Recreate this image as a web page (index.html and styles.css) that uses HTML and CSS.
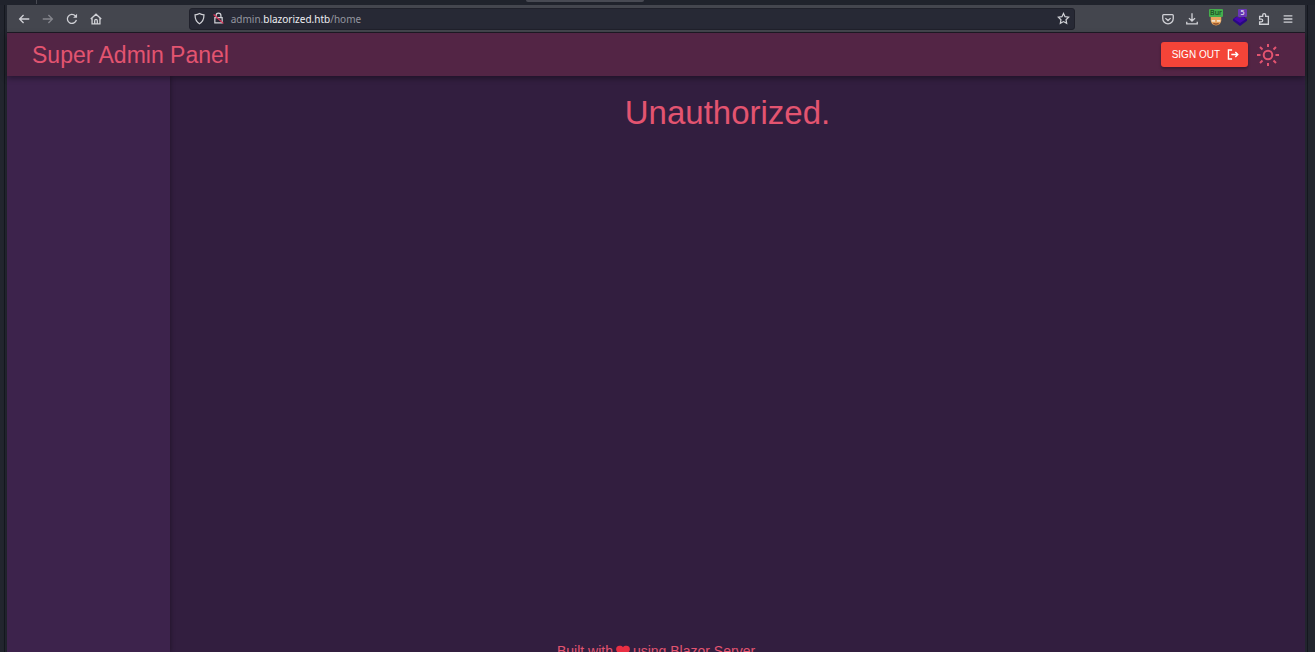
FILE: index.html
```html
<!DOCTYPE html>
<html lang="en">
<head>
<meta charset="utf-8">
<title>Super Admin Panel</title>
<link rel="stylesheet" href="styles.css">
</head>
<body>
<div class="tabstrip"><span class="tab-divider"></span><span class="tab-edge"></span></div>
<div class="window">
  <div class="toolbar">
    <nav class="tools nav-tools" aria-label="Navigation">
      <button class="tool" aria-label="Back"><svg viewBox="0 0 16 16"><path d="M14 8H3M7.500 3.500 3 8l4.500 4.500"/></svg></button>
      <button class="tool dim" aria-label="Forward"><svg viewBox="0 0 16 16"><path d="M2 8h11M8.500 3.500 13 8l-4.500 4.500"/></svg></button>
      <button class="tool" aria-label="Reload"><svg viewBox="0 0 16 16"><path d="M13 9a5.200 5.200 0 1 1-1.300-4.700L13 5.500"/><path d="M13.800 2v4.500H9.300z" class="solid"/></svg></button>
      <button class="tool" aria-label="Home"><svg viewBox="0 0 16 16"><path d="M2 8 8 2.500 14 8M3.500 7v6.500h9V7M6.500 13.500V10a1.500 1.500 0 0 1 3 0v3.500"/></svg></button>
    </nav>
    <div class="urlbar">
      <svg class="url-icon" viewBox="0 0 16 16"><path d="M8 1.800c1.500 1 3.500 1.500 5.500 1.700 0 5-1 8.500-5.500 10.900C3.500 12 2.500 8.500 2.500 3.500 4.500 3.300 6.500 2.800 8 1.800z"/></svg>
      <svg class="url-icon lock" viewBox="0 0 16 16"><path d="M5 7V4.500a3 3 0 0 1 6 0V7M3.500 7h9v6.500h-9z"/><path class="slash" d="m2 3 12 11"/></svg>
      <a class="url" href="#">admin.<span class="domain">blazorized.htb</span>/home</a>
      <button class="star" aria-label="Bookmark"><svg viewBox="0 0 16 16"><path d="m8 1.800 1.900 4 4.400.6-3.200 3.100.8 4.400L8 11.800l-3.900 2.100.8-4.400L1.700 6.400l4.400-.6z"/></svg></button>
    </div>
    <div class="tools ext-tools">
      <button class="tool" aria-label="Pocket"><svg viewBox="0 0 16 16"><path d="M3 3h10a1 1 0 0 1 1 1v3.500a6 6 0 0 1-12 0V4a1 1 0 0 1 1-1zM5 7l3 2.800L11 7"/></svg></button>
      <button class="tool" aria-label="Downloads"><svg viewBox="0 0 16 16"><path d="M8 1.500v8.500M4.500 7 8 10.300 11.500 7M2 11v2.500h12V11"/></svg></button>
      <button class="tool badge-tool" aria-label="Proxy: Bur"><svg viewBox="0 0 16 16"><path d="M2 5h12v5q-1 5-6 5.500Q3 15 2 10z" fill="#e8a45c" stroke="none"/><path d="M3 9h4v2H3zM9 9h4v2H9z" fill="#f4e2cb" stroke="none"/><path d="M5 13q3 1.500 6 0" stroke="#8c4a28"/></svg><span class="badge green">Bur</span></button>
      <button class="tool badge-tool" aria-label="Wappalyzer: 5"><svg viewBox="0 0 16 16"><path d="m0 8 4-3 4 3 4-3 4 3v2l-8 6-8-6z" fill="#2a0785" stroke="none"/><path d="m1 8 7 4.500L15 8l-4-3-3 2-3-2z" fill="#4608ad" stroke="none"/></svg><span class="badge purple">5</span></button>
      <button class="tool" aria-label="Extensions"><svg viewBox="0 0 16 16"><path d="M3 5h3.500V3.500a1.700 1.700 0 0 1 3.400 0V5H13v9H3v-2.800h2a1.500 1.500 0 0 0 0-3H3z"/></svg></button>
      <button class="tool" aria-label="Menu"><svg viewBox="0 0 16 16"><path d="M3 4.500h10M3 8h10M3 11.500h10"/></svg></button>
    </div>
  </div>
  <div class="app">
    <header class="appbar">
      <div class="brand">Super Admin Panel</div>
      <button class="signout">SIGN OUT <svg viewBox="0 0 16 16"><path d="M7.500 2.500H3v11h4.500M6.500 8h7.800M11.500 5 14.500 8l-3 3"/></svg></button>
      <button class="theme" aria-label="Toggle theme"><svg viewBox="0 0 24 24"><circle cx="12" cy="12" r="4.300"/><path d="M12 1v3M12 20v3M1 12h3.500M19.500 12H23M4 4l2.500 2.500M17.500 17.500 20 20M4 20l2.500-2.500M17.500 6.500 20 4"/></svg></button>
    </header>
    <div class="layout">
      <aside class="drawer"></aside>
      <main class="main"><h1>Unauthorized.</h1></main>
      <footer class="footer">Built with <svg viewBox="0 0 16 14" role="img" aria-label="love"><path d="M8 14 1.500 7.800C-1 5 0 .5 4 .5c2 0 3.300 .5 4 1.500C8.700 1 10 .5 12 .5c4 0 5 4.500 2.500 7.300z"/></svg> using Blazor Server</footer>
    </div>
  </div>
</div>
</body>
</html>
```
FILE: styles.css
```css
* { box-sizing: border-box; }
html, body { height: 100%; margin: 0; }
body {
  display: flex;
  flex-direction: column;
  overflow: hidden;
  background: #22252e;
  color: #e35470;
  font-family: "Liberation Sans", Arial, sans-serif;
}
button { padding: 0; border: 0; background: none; color: inherit; font: inherit; cursor: pointer; }
svg { display: block; fill: none; stroke: currentColor; }

.tabstrip { position: relative; flex: none; height: 5px; background: #20232c; }
.tab-divider { position: absolute; left: 36px; top: 0; width: 1px; height: 4px; background: #484a52; }
.tab-edge { position: absolute; left: 40%; top: 0; width: 9%; height: 2px; background: #484a53; border-radius: 0 0 2px 2px; }

.window {
  flex: 1;
  min-height: 0;
  display: flex;
  flex-direction: column;
  margin: 0 7px 0 4px;
  border: solid #14171e;
  border-width: 0 1px;
  padding: 0 2px;
}
.toolbar {
  flex: none;
  display: flex;
  align-items: center;
  height: 28px;
  background: #44464e;
  border-bottom: 1px solid #1e1b26;
  color: #d0d1d6;
}
.tools { display: flex; gap: 10px; }
.tool { width: 14px; height: 14px; }
.tool svg { width: 14px; height: 14px; stroke-width: 1.5; }
.dim { color: #85868d; }
.nav-tools { padding-left: 10px; width: 14%; }
.urlbar {
  flex: 1;
  display: flex;
  align-items: center;
  height: 22px;
  padding: 0 4px 0 3px;
  background: #272935;
  border: 1px solid #20212b;
  border-radius: 3px;
}
.url-icon { width: 13px; height: 13px; margin-right: 6px; stroke-width: 1.5; }
.slash { stroke: #dc3158; }
.url { flex: 1; color: #94969f; font: 10px/16px "Noto Sans", sans-serif; text-decoration: none; }
.domain { color: #eeeef2; }
.star svg { width: 13px; height: 13px; stroke-width: 1.5; }
.nav-tools .solid { fill: currentColor; stroke: none; }
.ext-tools { justify-content: flex-end; width: 230px; padding-right: 10px; }
.badge-tool { position: relative; }
.badge {
  position: absolute;
  left: 0;
  top: -3px;
  height: 8px;
  font: 7px/8px "Noto Sans", sans-serif;
  border-radius: 1px;
}
.green { width: 14px; background: #45ad4d; color: #123516; }
.purple { left: 5px; width: 9px; background: #6838b4; color: #ffffff; }

.app { flex: 1; min-height: 0; display: flex; flex-direction: column; background: #321e3f; }
.appbar {
  position: relative;
  z-index: 2;
  flex: none;
  display: flex;
  align-items: center;
  height: 43px;
  padding: 0 25px;
  background: #532545;
  box-shadow: 0 2px 6px rgba(0, 0, 0, .4);
}
.brand { flex: 1; font-size: 23px; line-height: 32px; }
.signout {
  display: flex;
  align-items: center;
  gap: 6px;
  height: 25px;
  padding: 0 9px 0 11px;
  margin-right: 8px;
  border-radius: 3px;
  background: #f44438;
  box-shadow: 0 2px 3px rgba(0, 0, 0, .3);
  color: #ffffff;
  font-size: 10px;
  line-height: 16px;
}
.signout svg { width: 13px; height: 13px; stroke-width: 1.7; }
.theme svg { width: 24px; height: 24px; stroke-width: 2; }
.layout {
  flex: 1;
  min-height: 0;
  display: grid;
  grid-template-columns: 163px 1fr;
  grid-template-rows: 1fr 9px;
}
.drawer {
  grid-row: 1 / 3;
  grid-column: 1;
  background: #3d234c;
  box-shadow: 1px 0 4px rgba(0, 0, 0, .3);
}
.main { grid-row: 1; grid-column: 2; padding: 17px 20px 0 0; text-align: center; }
.main h1 { margin: 0; font-size: 33px; font-weight: 400; line-height: 40px; }
.footer {
  z-index: 1;
  grid-row: 2;
  grid-column: 1 / 3;
  display: flex;
  justify-content: center;
  gap: 3px;
  font-size: 14px;
  line-height: 16px;
}
.footer svg { width: 14px; height: 13px; margin-top: 2px; fill: #e92f43; stroke: none; }
```
